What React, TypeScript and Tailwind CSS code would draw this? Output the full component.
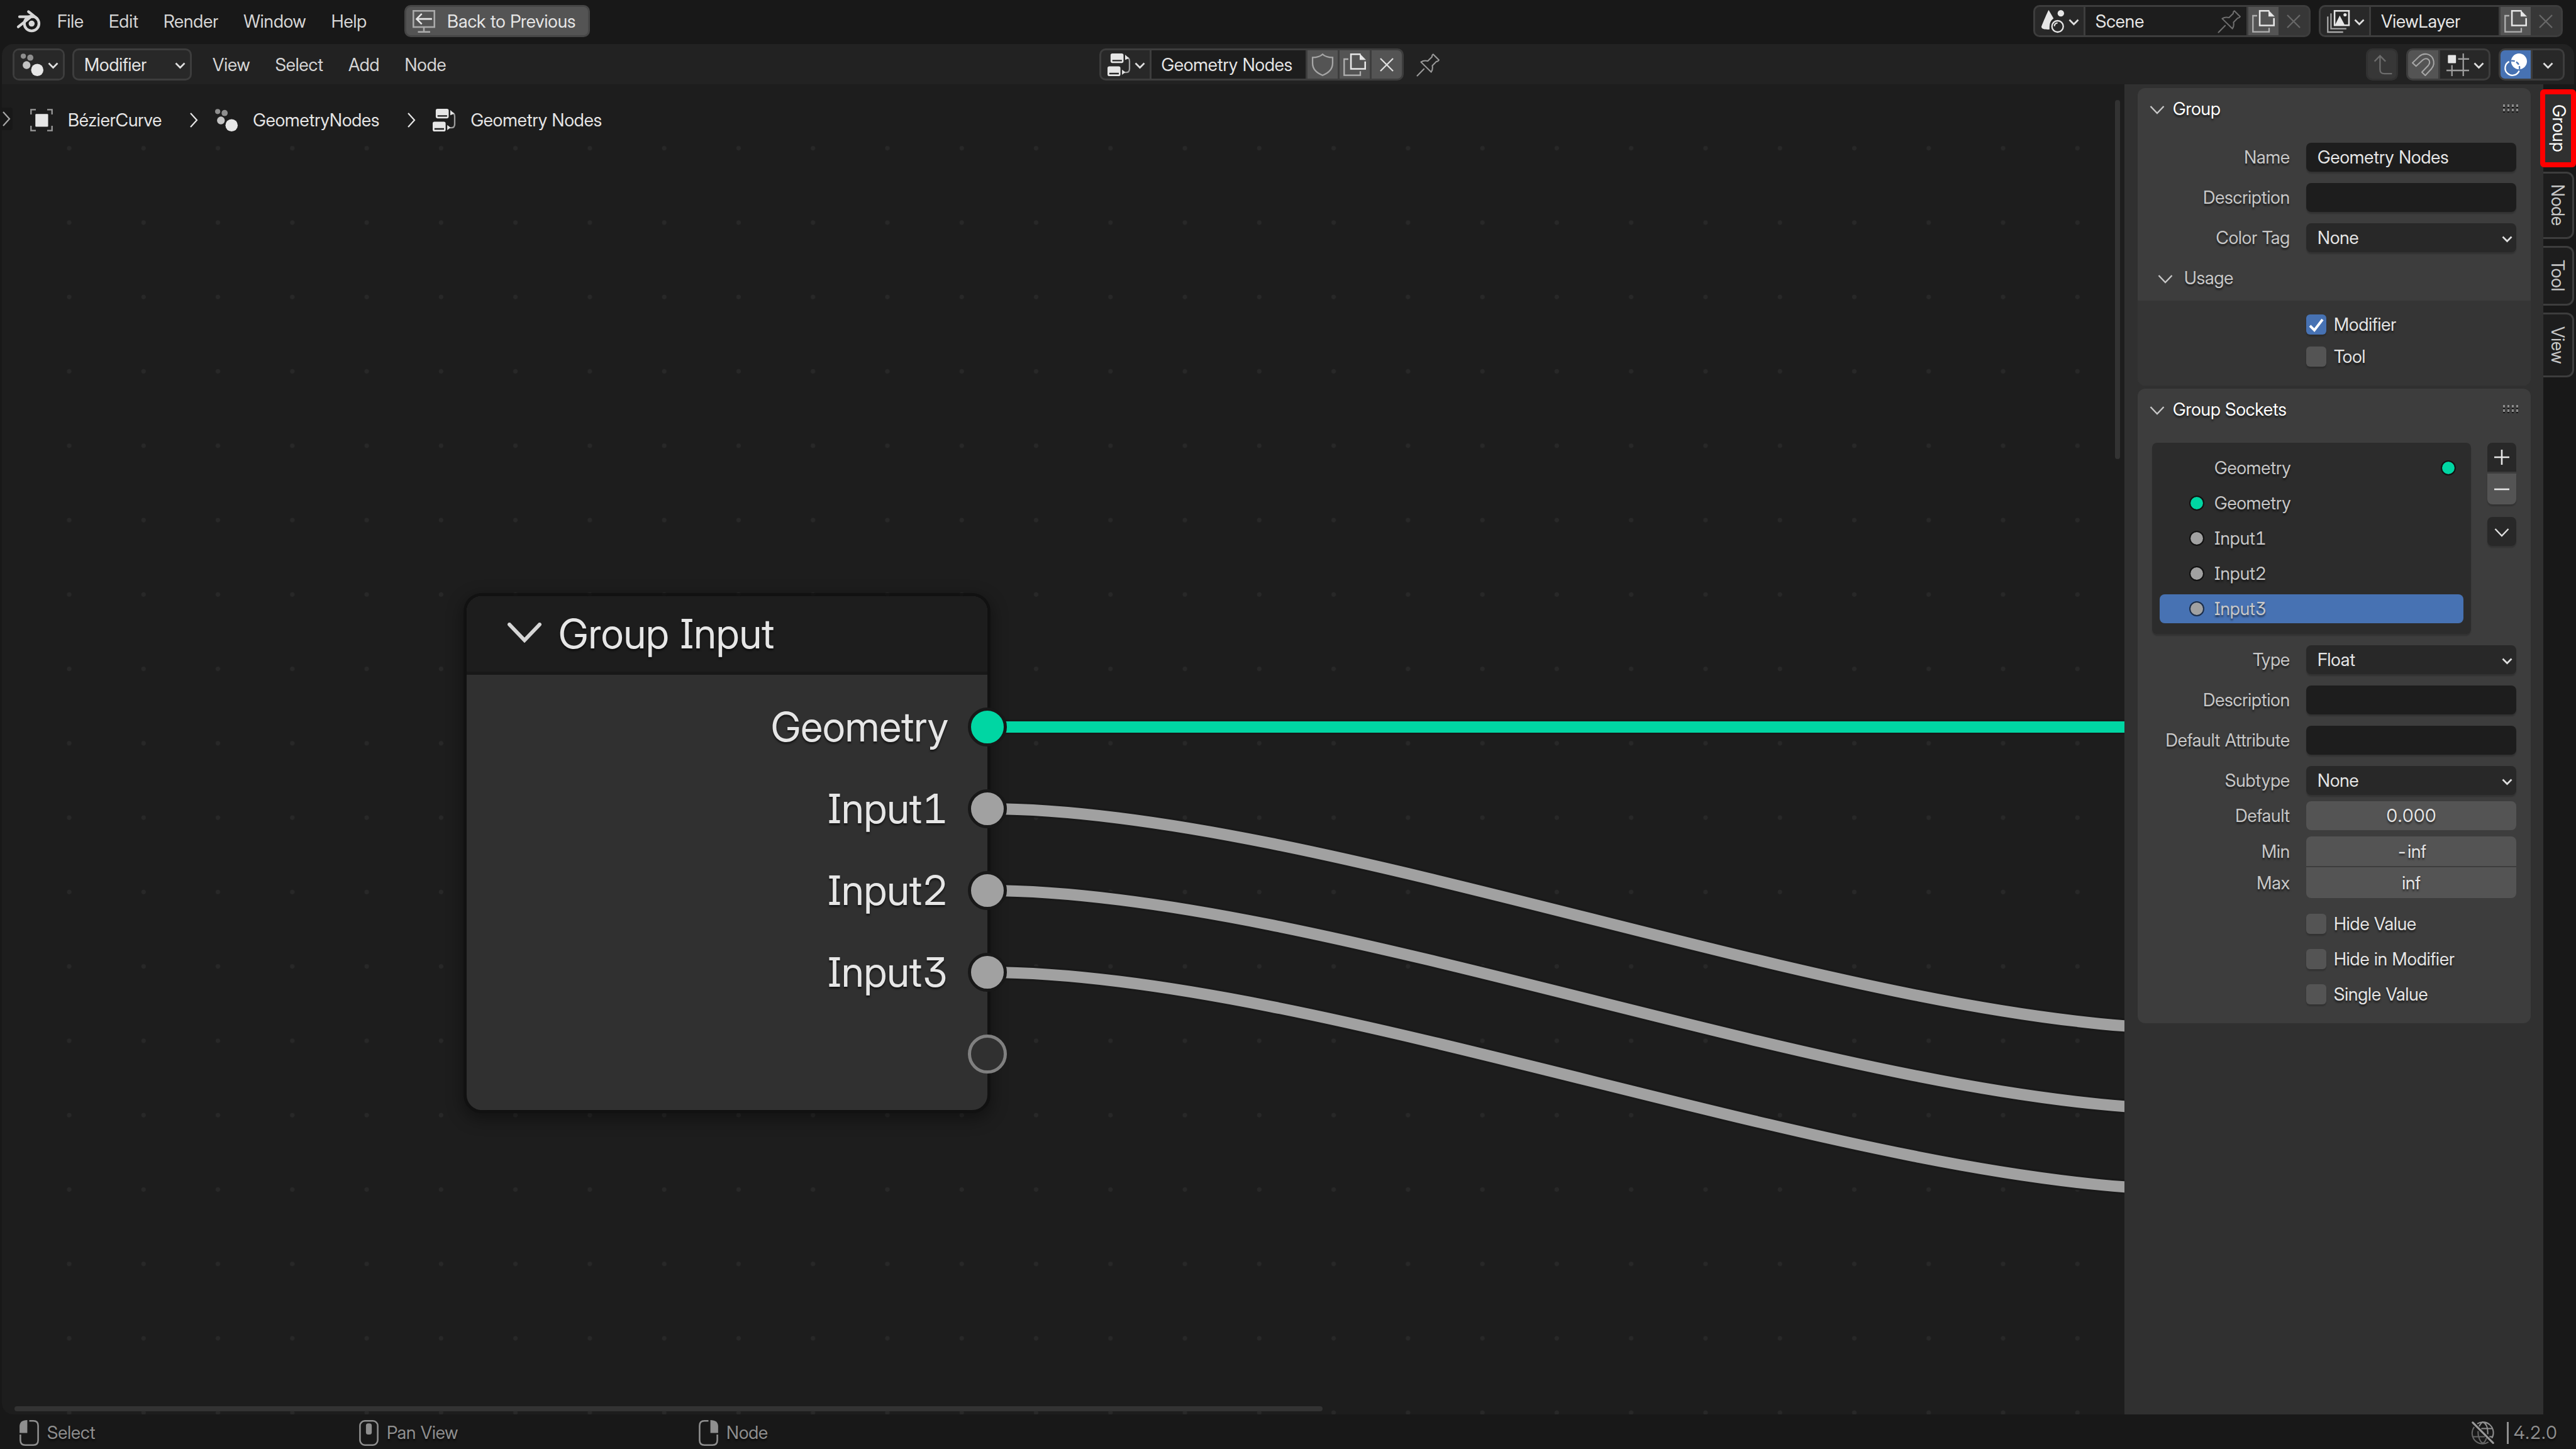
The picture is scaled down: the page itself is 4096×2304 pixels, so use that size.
import React from "react";

type IconProps = { className?: string };

const Svg = ({
  children,
  className = "size-9",
  viewBox = "0 0 14 14",
}: {
  children: React.ReactNode;
  className?: string;
  viewBox?: string;
}) => (
  <svg viewBox={viewBox} className={`block shrink-0 overflow-visible ${className}`} fill="none" aria-hidden="true">
    {children}
  </svg>
);

const BlenderLogo = () => (
  <Svg viewBox="0 0 15 14" className="h-9 w-[38px]">
    <g stroke="#d6d6d6" strokeWidth="1.7" strokeLinecap="round" strokeLinejoin="round">
      <circle cx="9.6" cy="8.4" r="4.6" />
      <path d="M7.6 .9 13 5.2" />
      <path d="M2 4.1h8.6" />
      <path d="M1.2 10.4 9 4.3" />
    </g>
    <circle cx="9.6" cy="8.4" r="1.9" fill="#d6d6d6" />
  </Svg>
);

const BackIcon = () => (
  <Svg>
    <g stroke="#aaaaaa">
      <rect x=".5" y=".5" width="13" height="10" />
      <path d="M7 10.5v3" />
      <path d="M3.3 13.5h7.6" />
    </g>
    <path d="M12 5.5H2.6M5.7 2.3 2.5 5.5l3.2 3.2" stroke="#e6e6e6" />
  </Svg>
);

const GeometryNodesIcon = () => (
  <Svg>
    <circle cx="1.6" cy="1.7" r="1.6" fill="#8e8e8e" />
    <circle cx="5.9" cy="2.6" r="1.9" fill="#8e8e8e" />
    <circle cx="3.6" cy="7.2" r="2.4" fill="#c4c4c4" />
    <circle cx="10.2" cy="10.2" r="3.8" fill="#e6e6e6" />
  </Svg>
);

const NodeTreeIcon = () => (
  <Svg>
    <path
      fillRule="evenodd"
      fill="#e6e6e6"
      d="M3 0h5.8a1.1 1.1 0 0 1 1.1 1.1v3.7a1.1 1.1 0 0 1-1.1 1.1H3a1.1 1.1 0 0 1-1.1-1.1V1.1A1.1 1.1 0 0 1 3 0ZM3 4v.9h5.9V4ZM1.1 8h5.8A1.1 1.1 0 0 1 8 9.1v3.8A1.1 1.1 0 0 1 6.9 14H1.1A1.1 1.1 0 0 1 0 12.9V9.1A1.1 1.1 0 0 1 1.1 8Zm0 4v.9H7V12Z"
    />
    <path d="M12 2.5q1.6.3 1.6 2.2v4.8q0 2.2-2.2 2.2H10" stroke="#9c9c9c" strokeWidth=".9" />
    <path d="M10.9.8 13.3 3l-2.4 1Z" fill="#e6e6e6" />
    <path d="M9 10v3.2l2-1.6Z" fill="#e6e6e6" />
  </Svg>
);

const ObjectIcon = () => (
  <Svg>
    <rect x="3.2" y="3.2" width="7.9" height="7.9" rx=".5" fill="#e6e6e6" />
    <path d="M.5 3.5v-3h3M10.5.5h3v3M13.5 10.5v3h-3M3.5 13.5h-3v-3" stroke="#9a9a9a" strokeWidth=".9" />
  </Svg>
);

const ShieldIcon = () => (
  <Svg>
    <path
      d="M7 .5Q5 2.5.8 2.5V6c0 4 3.2 6.3 6.2 7.5 3-1.2 6.2-3.500 6.2-7.5V2.5Q9 2.5 7 .5Z"
      stroke="#a6a6a6"
      strokeWidth=".9"
    />
  </Svg>
);

const CopyIcon = () => (
  <Svg>
    <path d="M3.1 3.5H.5v10h10V11" stroke="#b0b0b0" strokeWidth=".9" />
    <path d="M13.5 5v4.5H4.7V.5h6" stroke="#e6e6e6" />
    <path d="M10.1 0 14 4h-3.9Z" fill="#e6e6e6" />
  </Svg>
);

const CrossIcon = ({ className = "text-[#e0e0e0]" }: IconProps) => (
  <Svg className={`size-9 ${className}`}>
    <path d="m3.1 3.1 7.8 7.8M10.9 3.1l-7.8 7.8" stroke="currentColor" strokeWidth=".9" />
  </Svg>
);

const PinIcon = ({ className = "text-[#9a9a9a]" }: IconProps) => (
  <Svg className={`size-9 ${className}`}>
    <path
      d="M10 .5 13.6 4.1q-.6.9-1.6.9L9.5 7.6q.5 2.2-.7 3.9L2.5 5.3q1.8-1.2 4.2-.6L9.3 2.1Q9.2 1 10 .5ZM4.3 9.6.2 13.8"
      stroke="currentColor"
      strokeWidth=".8"
      strokeLinejoin="round"
      strokeLinecap="round"
    />
  </Svg>
);

const SceneIcon = () => (
  <Svg>
    <path d="M4.5 0 7.5 5.2Q5 7 5 10.3V12C2.3 12.1 0 11.7 0 10.4 0 9.9 4.2 0 4.5 0Z" fill="#e6e6e6" />
    <circle cx="12" cy="2" r="2" fill="#e6e6e6" />
    <circle cx="10" cy="10.1" r="3.5" stroke="#e6e6e6" strokeWidth=".9" />
    <path d="M8 10q.1-1.9 2-2" stroke="#e6e6e6" strokeWidth=".8" />
  </Svg>
);

const ViewLayerIcon = () => (
  <Svg>
    <path d="M.5 4v9.6H10M2.5 2v9.5H12" stroke="#a8a8a8" strokeWidth=".9" />
    <rect x="4.7" y=".5" width="8.9" height="8.9" stroke="#e6e6e6" />
    <path d="m5 9.2 2.9-5.8L11 9.2Z" fill="#e6e6e6" />
    <circle cx="11.2" cy="2.9" r="1" fill="#e6e6e6" />
  </Svg>
);

const ParentIcon = () => (
  <Svg>
    <path d="M5.6 1.5v8.4q0 2.6 2.6 2.6H13M2.2 4.9l3.4-3.5L9 4.9" stroke="#6c6c6c" strokeWidth=".9" />
  </Svg>
);

const MagnetIcon = () => (
  <Svg>
    <path
      d="M.4 5.8 4.7 1.7C7.3-.6 11.4.1 13 3.2c1 2.3.6 4.5-.9 6.3l-3.8 4.1-2.1-2L10 7.6c1.2-1.5 1.2-2.7.5-3.6-.9-1.1-2.5-1.1-3.8.1L2.6 7.9Z"
      stroke="#a6a6a6"
      strokeWidth=".8"
      strokeLinejoin="round"
    />
  </Svg>
);

const SnapGridIcon = () => (
  <Svg>
    <rect x=".9" y="1" width="5" height="5" rx=".4" fill="#e6e6e6" />
    <path d="M7.2 3.4H14M10.4 0v14M0 10.5h14M3.4 7.2V14" stroke="#9c9c9c" strokeWidth=".9" />
  </Svg>
);

const OverlayIcon = () => (
  <Svg>
    <circle cx="9.1" cy="4.9" r="4.9" fill="#ffffff" />
    <path d="M3 5A4.5 4.5 0 1 0 9.2 10.7" stroke="#ffffff" strokeWidth=".9" />
    <path d="M4.3 4.6A4.5 4.5 0 0 1 9.4 9.7" stroke="#4772b3" strokeWidth=".9" strokeDasharray="2.2 1" />
  </Svg>
);

const SmallChevron = () => (
  <Svg viewBox="0 0 17 17" className="size-[17px]">
    <path d="m1.5 6.500 7 7 7-7" stroke="#e0e0e0" strokeWidth="2.7" />
  </Svg>
);

const PanelChevron = ({ className = "text-[#c8c8c8]" }: IconProps) => (
  <Svg viewBox="0 0 24 24" className={`size-6 ${className}`}>
    <path d="m1.5 8 10.5 11L22.5 8" stroke="currentColor" strokeWidth="2.4" />
  </Svg>
);

const SideChevron = ({ className = "text-[#d0d0d0]" }: IconProps) => (
  <Svg viewBox="0 0 14 24" className={`h-6 w-[14px] ${className}`}>
    <path d="m2 1 10 11L2 23" stroke="currentColor" strokeWidth="2.2" />
  </Svg>
);

const Grip = () => (
  <Svg viewBox="0 0 24 14" className="h-[14px] w-6">
    {[0, 7, 14, 21].map((x) => (
      <React.Fragment key={x}>
        <rect x={x} y="0" width="3" height="4" fill="#8c8c8c" />
        <rect x={x} y="4" width="3" height="2" fill="#151515" />
        <rect x={x} y="7" width="3" height="4" fill="#8c8c8c" />
        <rect x={x} y="11" width="3" height="2" fill="#151515" />
      </React.Fragment>
    ))}
  </Svg>
);

const MouseIcon = ({ button }: { button: "left" | "middle" | "right" }) => (
  <Svg viewBox="0 0 12 16" className="h-[41px] w-[31px]">
    {button === "middle" ? (
      <>
        <rect x=".5" y=".5" width="11" height="15" rx="3" stroke="#8f8f8f" />
        <rect x="4.2" y="2" width="3.6" height="7" rx="1.4" fill="#8f8f8f" />
      </>
    ) : (
      <g transform={button === "right" ? "matrix(-1 0 0 1 12 0)" : undefined}>
        <path d="M4.8 0v8H0V4q0-4 4.8-4Z" fill="#8f8f8f" />
        <path d="M6 .5h2.5q3 0 3 3v9q0 3-3 3h-5q-3 0-3-3V9" stroke="#8f8f8f" />
      </g>
    )}
  </Svg>
);

const OfflineIcon = () => (
  <Svg>
    <g stroke="#8f8f8f" strokeWidth=".8">
      <g opacity=".65">
        <path d="M1.6 3.5a6.5 6.5 0 0 0 8.8 9.3M1 9.5h7.2M4 6v1c0 3 1.5 6 3 6.500M7 13.5c.9-.4 1.7-1.6 2.2-3.2" />
      </g>
      <path d="M3.5 1.5a6.5 6.5 0 0 1 9 8.9M6 4.5h7M7 .5C5.9.9 5.2 2 4.7 3.2M7 .5c2 .8 3 3.5 3 6.5v1M11 9.5h2" />
    </g>
    <path d="m.7.7 12.6 12.7" stroke="#9a9a9a" strokeWidth="1.2" strokeLinecap="round" />
  </Svg>
);

const shade = "[text-shadow:0_3px_3px_rgba(0,0,0,0.55)]";

const MenuButton = ({ children }: { children: string }) => (
  <button type="button" className="whitespace-nowrap text-[#d6d6d6]">
    {children}
  </button>
);

const IconMenu = ({ label, children }: { label: string; children: React.ReactNode }) => (
  <button type="button" aria-label={label} className="flex items-center gap-[7px] bg-[#282828] pr-[7px] pl-[10px]">
    {children}
    <SmallChevron />
  </button>
);

const WidgetGroup = ({ children, className = "" }: { children: React.ReactNode; className?: string }) => (
  <div
    className={`flex h-[51px] shrink-0 gap-[3px] overflow-hidden rounded-[10px] border-[3px] border-[#3d3d3d] bg-[#3d3d3d] ${className}`}
  >
    {children}
  </div>
);

const IconButton = ({
  label,
  children,
  className = "bg-[#545454]",
}: {
  label: string;
  children: React.ReactNode;
  className?: string;
}) => (
  <button type="button" aria-label={label} className={`flex w-12 items-center justify-center ${className}`}>
    {children}
  </button>
);

const DataBlock = ({
  icon,
  label,
  value,
  className,
  pin,
}: {
  icon: React.ReactNode;
  label: string;
  value: string;
  className: string;
  pin?: boolean;
}) => (
  <WidgetGroup className={className}>
    <IconMenu label={`Browse ${label}`}>{icon}</IconMenu>
    <div className="flex min-w-0 flex-1 items-center bg-[#1d1d1d] pr-[9px] pl-4">
      <input aria-label={label} defaultValue={value} className="min-w-0 flex-1 bg-transparent text-[#e6e6e6]" />
      {pin && (
        <button type="button" aria-label={`Pin ${label}`}>
          <PinIcon className="text-[#6e6e6e]" />
        </button>
      )}
    </div>
    <IconButton label={`New ${label}`}>
      <CopyIcon />
    </IconButton>
    <IconButton label={`Remove ${label}`} className="-ml-[3px] bg-[#373737]">
      <CrossIcon className="text-[#686868]" />
    </IconButton>
  </WidgetGroup>
);

const TopBar = () => (
  <header className="flex h-[70px] shrink-0 items-start justify-between bg-[#181818] pt-2 pr-[21px] pl-[26px]">
    <div className="flex h-[51px] items-center">
      <button type="button" aria-label="Blender" className="mr-[27px]">
        <BlenderLogo />
      </button>
      <nav className="flex gap-10">
        {["File", "Edit", "Render", "Window", "Help"].map((m) => (
          <MenuButton key={m}>{m}</MenuButton>
        ))}
      </nav>
      <button
        type="button"
        className="ml-[60px] flex h-[51px] items-center gap-[19px] rounded-[10px] border-[3px] border-[#464646] bg-[#545454] pr-5 pl-[10px] whitespace-nowrap text-[#e6e6e6]"
      >
        <BackIcon />
        Back to Previous
      </button>
    </div>
    <div className="flex gap-[13px]">
      <DataBlock icon={<SceneIcon />} label="Scene" value="Scene" className="w-[441px]" pin />
      <DataBlock icon={<ViewLayerIcon />} label="View layer" value="ViewLayer" className="w-[388px]" />
    </div>
  </header>
);

const EditorHeader = () => (
  <div className="grid h-16 shrink-0 grid-cols-[1fr_auto_1fr] items-start rounded-t-[18px] bg-[#222222] pt-[7px] pr-[15px] pl-[17px]">
    <div className="flex h-[51px] items-center">
      <WidgetGroup>
        <IconMenu label="Editor type">
          <GeometryNodesIcon />
        </IconMenu>
      </WidgetGroup>
      <div className="relative ml-3">
        <select
          aria-label="Node tree context"
          className="block h-[51px] w-[190px] appearance-none rounded-[10px] border-[3px] border-[#3d3d3d] bg-[#282828] pl-4 text-[#e6e6e6]"
        >
          <option>Modifier</option>
        </select>
        <span className="pointer-events-none absolute inset-y-0 right-[10px] flex items-center">
          <SmallChevron />
        </span>
      </div>
      <nav className="ml-[33px] flex gap-10">
        {["View", "Select", "Add", "Node"].map((m) => (
          <MenuButton key={m}>{m}</MenuButton>
        ))}
      </nav>
    </div>
    <div className="flex items-center gap-[21px] pr-[62px]">
      <WidgetGroup className="w-[484px]">
        <IconMenu label="Browse node tree">
          <NodeTreeIcon />
        </IconMenu>
        <input
          aria-label="Node tree name"
          defaultValue="Geometry Nodes"
          className="min-w-0 flex-1 bg-[#1d1d1d] pl-4 text-[#e6e6e6]"
        />
        <IconButton label="Fake user">
          <ShieldIcon />
        </IconButton>
        <IconButton label="New node tree">
          <CopyIcon />
        </IconButton>
        <IconButton label="Unlink">
          <CrossIcon />
        </IconButton>
      </WidgetGroup>
      <button type="button" aria-label="Pin">
        <PinIcon />
      </button>
    </div>
    <div className="flex justify-end gap-[13px]">
      <button
        type="button"
        aria-label="Parent node tree"
        className="flex h-[51px] w-[51px] items-center justify-center rounded-[10px] border-[3px] border-[#313131] bg-[#373737]"
      >
        <ParentIcon />
      </button>
      <WidgetGroup>
        <IconButton label="Snap">
          <MagnetIcon />
        </IconButton>
        <IconMenu label="Snapping options">
          <SnapGridIcon />
        </IconMenu>
      </WidgetGroup>
      <WidgetGroup>
        <IconButton label="Overlays" className="bg-[#4772b3]">
          <OverlayIcon />
        </IconButton>
        <button type="button" aria-label="Overlay options" className="flex w-12 items-center justify-center bg-[#282828]">
          <SmallChevron />
        </button>
      </WidgetGroup>
    </div>
  </div>
);

const wires = [
  { id: "geometry", color: "#00d6a3", d: "M1570 1156H3600" },
  { id: "input1", color: "#a1a1a1", d: "M1570 1286C2100 1286 2960 1636 3490 1636" },
  { id: "input2", color: "#a1a1a1", d: "M1570 1416C2100 1416 2960 1764 3490 1764" },
  { id: "input3", color: "#a1a1a1", d: "M1570 1546C2100 1546 2960 1892 3490 1892" },
];

const sockets = [
  { label: "Geometry", dot: "border-[#181818] bg-[#00d6a3]" },
  { label: "Input1", dot: "border-[#181818] bg-[#a1a1a1]" },
  { label: "Input2", dot: "border-[#181818] bg-[#a1a1a1]" },
  { label: "Input3", dot: "border-[#181818] bg-[#a1a1a1]" },
  { label: "", dot: "border-[#808080] bg-[#303030]" },
];

const GroupInputNode = () => (
  <section className="absolute top-[814px] left-[739px] w-[828px] rounded-[24px] bg-[#303030] pb-6 text-[65px] leading-[80px] text-[#e6e6e6] shadow-[0_0_0_5px_rgba(16,16,16,0.85),0_8px_24px_8px_rgba(0,0,0,0.35)]">
    <h2 className="flex h-[125px] items-center gap-[27px] rounded-t-[24px] border-b-[5px] border-[#181818] bg-[#1d1d1d] pl-[65px]">
      <svg viewBox="0 0 54 32" className="-mt-1 h-8 w-[54px]" fill="none" aria-hidden="true">
        <path d="m3 3 24 25L51 3" stroke="#d6d6d6" strokeWidth="6" strokeLinecap="round" />
      </svg>
      <span className={shade}>Group Input</span>
    </h2>
    <ul className="pt-[18px]">
      {sockets.map((s, i) => (
        <li key={i} className="relative flex h-[130px] items-center justify-end pr-[62px]">
          <span className={shade}>{s.label}</span>
          <span className={`absolute top-[34px] -right-[31px] size-[62px] rounded-full border-[5px] ${s.dot}`} />
        </li>
      ))}
    </ul>
  </section>
);

const NodeCanvas = () => (
  <main className="relative min-w-0 flex-1 overflow-hidden rounded-bl-[18px] bg-[#1d1d1d]">
    <svg className="absolute inset-0 size-full" aria-hidden="true">
      <defs>
        <pattern id="grid" x="48" y="42.7" width="118.27" height="118.27" patternUnits="userSpaceOnUse">
          <circle cx="59" cy="59" r="3.5" fill="#282828" />
        </pattern>
      </defs>
      <rect width="100%" height="100%" fill="url(#grid)" />
      <g transform="translate(-3 -134)" fill="none">
        {wires.map((w) => (
          <g key={w.id}>
            <path d={w.d} stroke="#191919" strokeWidth="24" />
            <path d={w.d} stroke={w.color} strokeWidth="18" />
          </g>
        ))}
      </g>
    </svg>
    <nav className="relative flex h-[114px] items-center pl-[45px] text-[#e6e6e6]">
      <a href="#object" className="flex items-center gap-6">
        <ObjectIcon />
        BézierCurve
      </a>
      <SideChevron className="mr-[27px] ml-11" />
      <a href="#modifier" className="flex items-center gap-6">
        <GeometryNodesIcon />
        GeometryNodes
      </a>
      <SideChevron className="mr-[27px] ml-11" />
      <a href="#tree" className="flex items-center gap-6">
        <NodeTreeIcon />
        Geometry Nodes
      </a>
    </nav>
    <button
      type="button"
      aria-label="Show toolbar"
      className="absolute top-[37px] left-0 flex h-9 w-[17px] items-center rounded-r-sm bg-[#181818]"
    >
      <SideChevron className="text-[#a8a8a8]" />
    </button>
    <GroupInputNode />
    <div className="absolute top-[25px] right-[7px] h-[571px] w-2 rounded-full bg-[#333333]" />
    <div className="absolute bottom-[5px] left-5 h-2 w-[2080px] rounded-full bg-[#333333]" />
  </main>
);

const PanelTitle = ({ children }: { children: string }) => (
  <div className="flex h-[65px] items-center justify-between pr-5 pl-[19px]">
    <button type="button" className={`flex items-center gap-[13px] text-white ${shade}`}>
      <PanelChevron />
      {children}
    </button>
    <Grip />
  </div>
);

const Row = ({ id, label, children }: { id: string; label: string; children: React.ReactNode }) => (
  <div className="grid grid-cols-[242px_1fr] items-center gap-x-[26px] pr-[23px]">
    <label htmlFor={id} className={`text-right whitespace-nowrap text-[#c8c8c8] ${shade}`}>
      {label}
    </label>
    {children}
  </div>
);

const lift = "shadow-[0_3px_2px_rgba(0,0,0,0.18)]";

const TextRow = ({ id, label, value = "" }: { id: string; label: string; value?: string }) => (
  <Row id={id} label={label}>
    <input
      id={id}
      defaultValue={value}
      className={`h-[46px] w-full rounded-lg bg-[#1d1d1d] pl-[18px] text-[#e6e6e6] ${lift}`}
    />
  </Row>
);

const SelectRow = ({ id, label, value }: { id: string; label: string; value: string }) => (
  <Row id={id} label={label}>
    <div className="relative">
      <select
        id={id}
        className={`block h-[46px] w-full appearance-none rounded-lg bg-[#282828] pl-[18px] text-[#e6e6e6] ${lift}`}
      >
        <option>{value}</option>
      </select>
      <span className="pointer-events-none absolute inset-y-0 right-[6px] flex items-center">
        <SmallChevron />
      </span>
    </div>
  </Row>
);

const NumberRow = ({ id, label, value, shape }: { id: string; label: string; value: string; shape: string }) => (
  <Row id={id} label={label}>
    <input id={id} defaultValue={value} className={`w-full bg-[#545454] text-center text-[#e6e6e6] ${shape} ${shade}`} />
  </Row>
);

const Check = ({ label, checked = false, height }: { label: string; checked?: boolean; height: string }) => (
  <label className={`ml-[268px] flex items-center gap-3 whitespace-nowrap text-[#e6e6e6] ${height} ${shade}`}>
    <span className="relative block size-8">
      <input
        type="checkbox"
        defaultChecked={checked}
        className={`block size-8 appearance-none rounded-md bg-[#545454] checked:bg-[#4772b3] ${lift}`}
      />
      {checked && (
        <svg viewBox="0 0 32 32" className="pointer-events-none absolute inset-0 size-8" fill="none" aria-hidden="true">
          <path d="m6 18 7 7L26 8" stroke="#ffffff" strokeWidth="4" />
        </svg>
      )}
    </span>
    {label}
  </label>
);

const items = [
  { label: "Geometry", left: "", right: "bg-[#00d6a3]" },
  { label: "Geometry", left: "bg-[#00d6a3]", right: "" },
  { label: "Input1", left: "bg-[#a1a1a1]", right: "" },
  { label: "Input2", left: "bg-[#a1a1a1]", right: "" },
  { label: "Input3", left: "bg-[#a1a1a1]", right: "", selected: true },
];

const Dot = ({ color }: { color: string }) => (
  <span className={`block size-6 rounded-full ${color ? `border-2 border-black/60 bg-clip-padding ${color}` : ""}`} />
);

const SocketList = () => (
  <div className="mt-[21px] flex items-start gap-[26px] pr-[23px] pl-[23px]">
    <ul className={`flex min-w-0 flex-1 flex-col gap-[10px] rounded-lg bg-[#2c2c2c] px-3 pt-[17px] pb-[17px] ${lift}`}>
      {items.map((it, i) => (
        <li key={i}>
          <button
            type="button"
            className={`flex h-[46px] w-full items-center rounded-lg px-3 pl-[47px] text-[#c8c8c8] ${
              it.selected ? "bg-[#4772b3]" : ""
            }`}
          >
            <Dot color={it.left} />
            <span className={`ml-4 flex-1 text-left ${shade}`}>{it.label}</span>
            <Dot color={it.right} />
          </button>
        </li>
      ))}
    </ul>
    <div className="flex flex-col">
      <button type="button" aria-label="Add item" className="flex size-[46px] items-center justify-center rounded-t-lg bg-[#282828]">
        <Svg viewBox="0 0 24 24" className="size-6">
          <path d="M12 0v24M0 12h24" stroke="#e6e6e6" strokeWidth="2.6" />
        </Svg>
      </button>
      <button
        type="button"
        aria-label="Remove item"
        className={`mt-[3px] flex h-[49px] w-[46px] items-center justify-center rounded-b-lg bg-[#545454] ${lift}`}
      >
        <Svg viewBox="0 0 24 24" className="size-6">
          <path d="M0 12h24" stroke="#e6e6e6" strokeWidth="2.6" />
        </Svg>
      </button>
      <button
        type="button"
        aria-label="Item options"
        className={`mt-5 flex size-[46px] items-center justify-center rounded-lg bg-[#282828] ${lift}`}
      >
        <PanelChevron className="text-[#e0e0e0]" />
      </button>
    </div>
  </div>
);

const Sidebar = () => (
  <aside className="flex w-[666px] shrink-0 flex-col gap-[5px] bg-[#303030] pt-[6px] pr-5 pl-[21px]">
    <section className="rounded-xl bg-[#3d3d3d]">
      <PanelTitle>Group</PanelTitle>
      <div className="mt-[22px] flex flex-col gap-[18px]">
        <TextRow id="group-name" label="Name" value="Geometry Nodes" />
        <TextRow id="group-description" label="Description" />
        <SelectRow id="color-tag" label="Color Tag" value="None" />
      </div>
      <button type="button" className={`mt-[6px] flex h-[69px] items-center gap-[18px] pl-[32px] text-[#c8c8c8] ${shade}`}>
        <PanelChevron />
        Usage
      </button>
      <div className="mt-[2px] rounded-b-xl bg-[#353535] pt-3 pb-[21px]">
        <Check label="Modifier" checked height="h-[51px]" />
        <Check label="Tool" height="h-[51px]" />
      </div>
    </section>
    <section className="rounded-xl bg-[#3d3d3d] pb-[18px]">
      <PanelTitle>Group Sockets</PanelTitle>
      <SocketList />
      <div className="mt-[18px] flex flex-col gap-[18px]">
        <SelectRow id="socket-type" label="Type" value="Float" />
        <TextRow id="socket-description" label="Description" />
        <TextRow id="default-attribute" label="Default Attribute" />
        <SelectRow id="subtype" label="Subtype" value="None" />
      </div>
      <div className="mt-[10px] flex flex-col">
        <NumberRow id="default" label="Default" value="0.000" shape="h-[46px] rounded-lg" />
        <div className="mt-[10px] flex flex-col gap-[2px]">
          <NumberRow id="min" label="Min" value="-inf" shape="h-[47px] rounded-t-lg" />
          <NumberRow id="max" label="Max" value="inf" shape="h-[49px] rounded-b-lg" />
        </div>
      </div>
      <div className="mt-[13px]">
        <Check label="Hide Value" height="h-14" />
        <Check label="Hide in Modifier" height="h-14" />
        <Check label="Single Value" height="h-14" />
      </div>
    </section>
  </aside>
);

const tabs = [
  { label: "Node", height: "h-[107px]" },
  { label: "Tool", height: "h-[95px]" },
  { label: "View", height: "h-[103px]" },
];

const TabStrip = () => (
  <div className="flex w-[49px] shrink-0 flex-col gap-[11px] bg-[#181818] pt-3">
    <button type="button" className="relative flex h-[116px] w-[49px] items-center justify-center bg-[#303030] text-white">
      <span className="[writing-mode:vertical-rl]">Group</span>
      <span className="absolute -inset-y-1 -right-[3px] -left-[5px] rounded-md border-8 border-[#ff0000]" />
    </button>
    {tabs.map((t) => (
      <button
        type="button"
        key={t.label}
        className={`flex w-[49px] items-center justify-center rounded-r-xl border-[3px] border-l-0 border-[#3d3d3d] bg-[#1d1d1d] text-[#c8c8c8] ${t.height}`}
      >
        <span className="[writing-mode:vertical-rl]">{t.label}</span>
      </button>
    ))}
  </div>
);

const StatusBar = () => (
  <footer className={`flex h-[55px] shrink-0 items-center bg-[#181818] pt-[3px] pr-[30px] pl-[31px] text-[#8f8f8f] ${shade}`}>
    <div className="flex w-[540px] items-center gap-[13px]">
      <MouseIcon button="left" />
      Select
    </div>
    <div className="flex w-[540px] items-center gap-[13px]">
      <MouseIcon button="middle" />
      Pan View
    </div>
    <div className="flex items-center gap-[13px]">
      <MouseIcon button="right" />
      Node
    </div>
    <div className="ml-auto flex items-center">
      <OfflineIcon />
      <span className="mr-2 ml-5 h-[35px] w-[3px] bg-[#8f8f8f]" />
      4.2.0
    </div>
  </footer>
);

export default function App() {
  return (
    <div className="flex h-screen w-full flex-col overflow-hidden bg-[#181818] font-['Inter_Display','Inter',sans-serif] text-[28px] leading-[34px] [font-feature-settings:'tnum','cv02','cv08','cv09']">
      <TopBar />
      <div className="mx-[3px] flex min-h-0 flex-1 flex-col">
        <EditorHeader />
        <div className="flex min-h-0 flex-1">
          <NodeCanvas />
          <Sidebar />
          <TabStrip />
        </div>
      </div>
      <StatusBar />
    </div>
  );
}
